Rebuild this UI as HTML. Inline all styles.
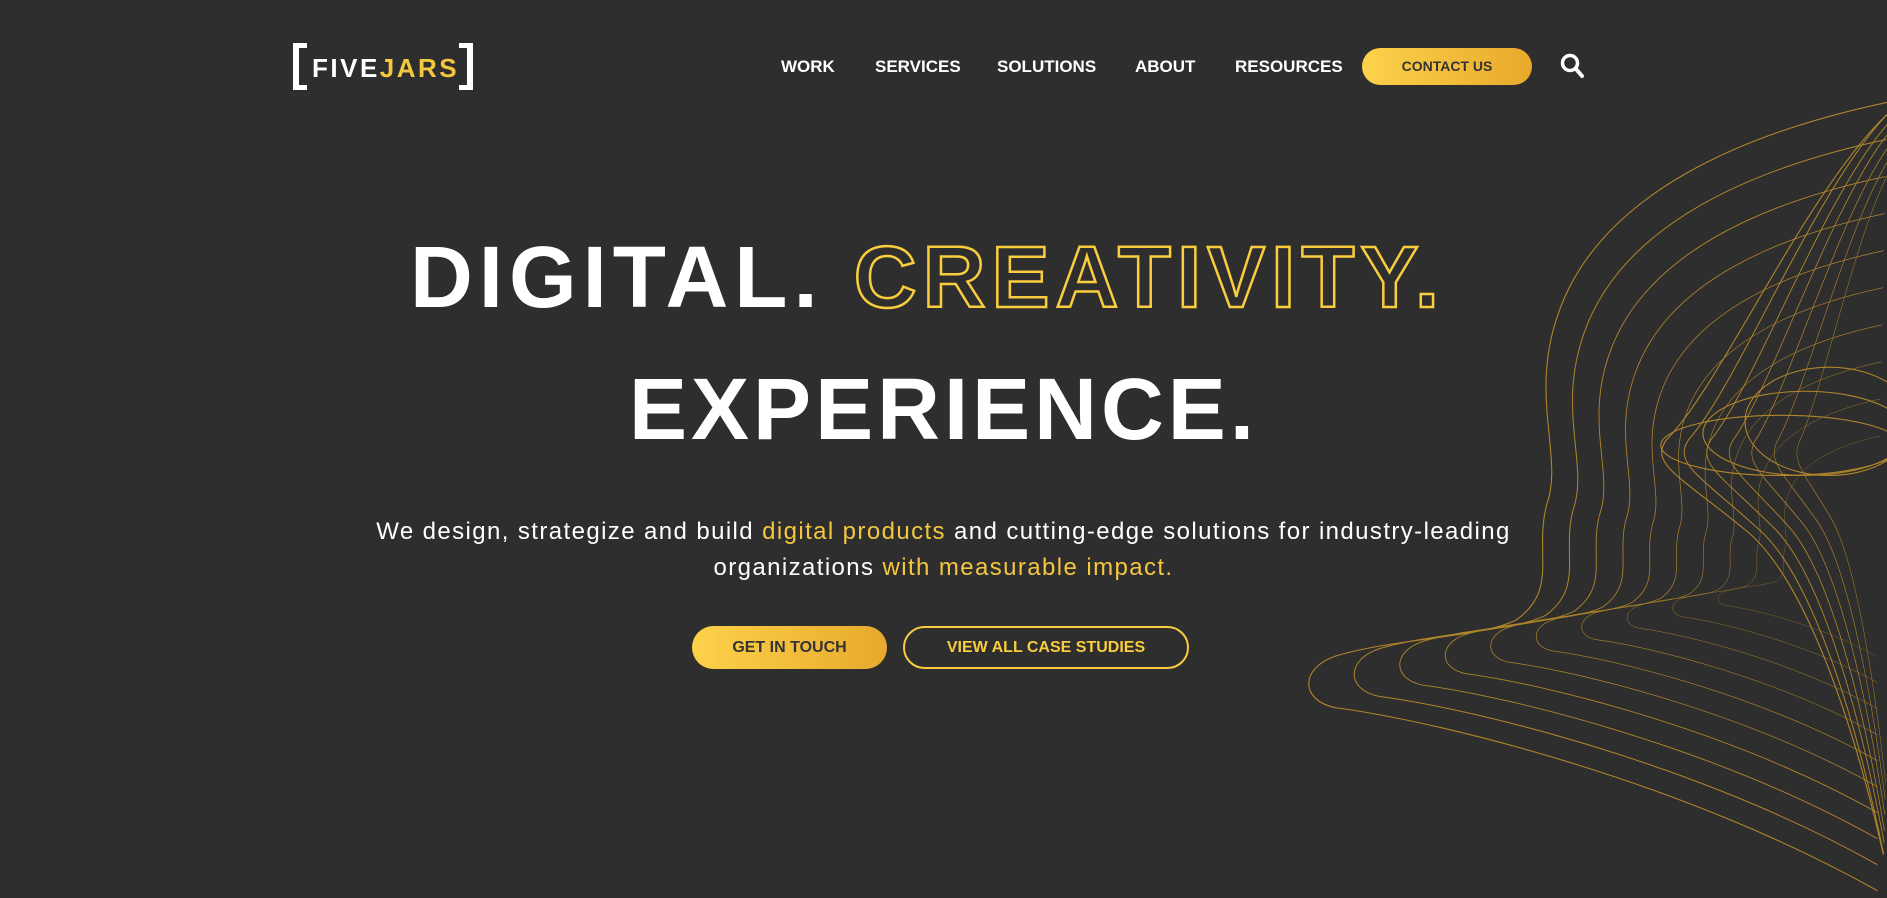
<!DOCTYPE html>
<html><head><meta charset="utf-8"><style>
*{margin:0;padding:0;box-sizing:border-box}
html,body{width:1887px;height:898px;overflow:hidden}
body{background:#2e2e2e;font-family:"Liberation Sans",sans-serif;position:relative;color:#fff}
.abs{position:absolute}
.logo{left:293px;top:43px;width:180px;height:47px;border-left:6px solid #fff;border-right:6px solid #fff;}
.logo:before,.logo:after{content:"";position:absolute;left:0;width:8px;height:5px;background:#fff;top:0;box-shadow:0 42px 0 #fff}
.logo:after{left:auto;right:0}
.logo span{position:absolute;left:13px;top:10px;font-size:26px;letter-spacing:2.5px;font-weight:bold;}
.nav{top:57px;font-size:17px;font-weight:bold;}
.cbtn{left:1362px;top:48px;width:170px;height:37px;border-radius:19px;background:linear-gradient(90deg,#fdd24a,#e8a92c);color:#333;font-weight:bold;font-size:14px;text-align:center;line-height:37px}
h1{position:absolute;left:0;width:1887px;text-align:center;font-size:87px;font-weight:bold;letter-spacing:4px;line-height:1}
.o{color:transparent;-webkit-text-stroke:2.5px #f9cd3e}
p{position:absolute;left:0;width:1887px;text-align:center;font-size:24px;line-height:36px;top:514px;letter-spacing:1.4px}
.y{color:#f5c73e}
.b1{left:692px;top:626px;width:195px;height:43px;border-radius:22px;background:linear-gradient(90deg,#fdd24a,#e8a92c);color:#333;font-weight:bold;font-size:16px;text-align:center;line-height:43px}
.b2{left:903px;top:626px;width:286px;height:43px;border-radius:22px;border:2px solid #f9cd3e;color:#f9cd3e;font-weight:bold;font-size:16px;text-align:center;line-height:39px}
</style></head><body>
<svg class="abs" style="left:0;top:0" width="1887" height="898" viewBox="0 0 1568 746" fill="none" stroke="#c8952a" stroke-width="0.9" opacity="0.85">
<defs><path id="w" d="M1568,85 C1450,110 1330,160 1295,260 C1270,330 1300,380 1285,420 C1275,460 1295,490 1260,515 C1230,530 1160,530 1110,545 C1080,555 1080,582 1110,588 C1200,600 1400,650 1560,740"/>
<path id="r" d="M1568,95 C1500,160 1430,320 1385,365 C1370,385 1395,395 1450,440 C1500,480 1540,600 1565,710"/></defs>
<use href="#w"/>
<use href="#w" transform="translate(1560 470) scale(.92) translate(-1560 -470)"/>
<use href="#w" transform="translate(1560 470) scale(.84) translate(-1560 -470)"/>
<use href="#w" transform="translate(1560 470) scale(.76) translate(-1560 -470)"/>
<use href="#w" transform="translate(1560 470) scale(.68) translate(-1560 -470)"/>
<use href="#w" transform="translate(1560 470) scale(.60) translate(-1560 -470)"/>
<use href="#w" transform="translate(1560 470) scale(.52) translate(-1560 -470)"/>
<use href="#w" transform="translate(1560 470) scale(.44) translate(-1560 -470)"/>
<use href="#w" transform="translate(1560 470) scale(.36) translate(-1560 -470)"/>
<use href="#w" transform="translate(1560 470) scale(.28) translate(-1560 -470)"/>
<use href="#r"/>
<use href="#r" transform="translate(1568 380) scale(.9 1) translate(-1568 -380)"/>
<use href="#r" transform="translate(1568 380) scale(.8 .97) translate(-1568 -380)"/>
<use href="#r" transform="translate(1568 380) scale(.7 .94) translate(-1568 -380)"/>
<use href="#r" transform="translate(1568 380) scale(.6 .9) translate(-1568 -380)"/>
<use href="#r" transform="translate(1568 380) scale(.5 .86) translate(-1568 -380)"/>
<use href="#r" transform="translate(1568 380) scale(.4 .82) translate(-1568 -380)"/>
<ellipse cx="1480" cy="370" rx="100" ry="25"/>
<ellipse cx="1500" cy="360" rx="85" ry="35"/>
<ellipse cx="1520" cy="350" rx="70" ry="45"/>
</svg>
<div class="abs logo"><span>FIVE<b class="y">JARS</b></span></div>
<div class="abs nav" style="left:781px">WORK</div>
<div class="abs nav" style="left:875px">SERVICES</div>
<div class="abs nav" style="left:997px">SOLUTIONS</div>
<div class="abs nav" style="left:1135px">ABOUT</div>
<div class="abs nav" style="left:1235px">RESOURCES</div>
<div class="abs cbtn">CONTACT US</div>
<svg class="abs" style="left:1560px;top:53px" width="26" height="28" viewBox="0 0 26 28"><circle cx="10" cy="10" r="7.5" stroke="#fff" stroke-width="3.5" fill="none"/><path d="M15.5 15.5 L22 23" stroke="#fff" stroke-width="4" stroke-linecap="round"/></svg>
<h1 style="top:234px;letter-spacing:6px;left:-16px">DIGITAL. <span class="o">CREATIVITY.</span></h1>
<h1 style="top:366px">EXPERIENCE.</h1>
<p>We design, strategize and build <span class="y">digital products</span> and cutting-edge solutions for industry-leading<br>organizations <span class="y">with measurable impact.</span></p>
<div class="abs b1">GET IN TOUCH</div>
<div class="abs b2">VIEW ALL CASE STUDIES</div>
</body></html>
